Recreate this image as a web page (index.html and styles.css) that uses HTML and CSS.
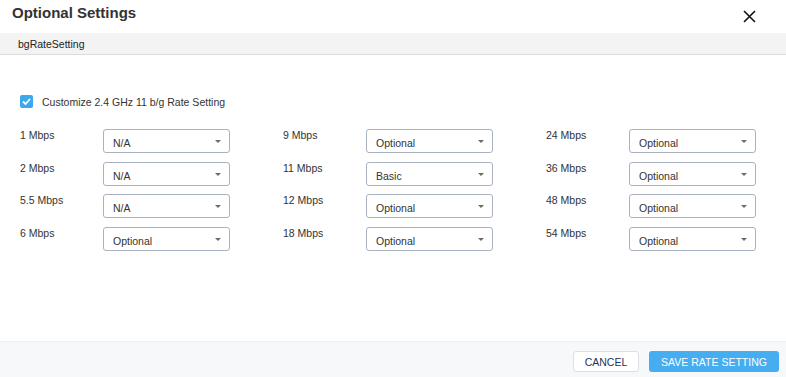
FILE: index.html
```html
<!DOCTYPE html>
<html lang="en">
<head>
    <meta charset="UTF-8">
    <meta name="viewport" content="width=device-width, initial-scale=1.0">
    <title>Optional Settings</title>
    <link rel="stylesheet" href="styles.css">
</head>
<body>

    <div class="dialog">
        <!-- Header -->
        <div class="dialog-header">
            <h1 class="dialog-title">Optional Settings</h1>
            <button class="close-btn" aria-label="Close">
                <svg width="13" height="13" viewBox="0 0 13 13">
                    <path d="M1 1 L12 12 M12 1 L1 12" stroke="#111" stroke-width="1.6" fill="none"/>
                </svg>
            </button>
        </div>

        <!-- Tab bar -->
        <div class="tab-bar">bgRateSetting</div>

        <!-- Content -->
        <div class="dialog-body">
            <label class="check-row">
                <span class="checkbox">
                    <svg width="9" height="7" viewBox="0 0 9 7">
                        <path d="M1 3.5 L3.5 6 L8 1" stroke="#fff" stroke-width="1.8" fill="none"/>
                    </svg>
                </span>
                Customize 2.4 GHz 11 b/g Rate Setting
            </label>

            <div class="rate-grid">
                <div class="rate-item"><span class="rate-label">1 Mbps</span><div class="select">N/A<span class="caret"></span></div></div>
                <div class="rate-item"><span class="rate-label">9 Mbps</span><div class="select">Optional<span class="caret"></span></div></div>
                <div class="rate-item"><span class="rate-label">24 Mbps</span><div class="select">Optional<span class="caret"></span></div></div>

                <div class="rate-item"><span class="rate-label">2 Mbps</span><div class="select">N/A<span class="caret"></span></div></div>
                <div class="rate-item"><span class="rate-label">11 Mbps</span><div class="select">Basic<span class="caret"></span></div></div>
                <div class="rate-item"><span class="rate-label">36 Mbps</span><div class="select">Optional<span class="caret"></span></div></div>

                <div class="rate-item"><span class="rate-label">5.5 Mbps</span><div class="select">N/A<span class="caret"></span></div></div>
                <div class="rate-item"><span class="rate-label">12 Mbps</span><div class="select">Optional<span class="caret"></span></div></div>
                <div class="rate-item"><span class="rate-label">48 Mbps</span><div class="select">Optional<span class="caret"></span></div></div>

                <div class="rate-item"><span class="rate-label">6 Mbps</span><div class="select">Optional<span class="caret"></span></div></div>
                <div class="rate-item"><span class="rate-label">18 Mbps</span><div class="select">Optional<span class="caret"></span></div></div>
                <div class="rate-item"><span class="rate-label">54 Mbps</span><div class="select">Optional<span class="caret"></span></div></div>
            </div>
        </div>

        <!-- Footer -->
        <div class="dialog-footer">
            <button class="btn btn-cancel">CANCEL</button>
            <button class="btn btn-save">SAVE RATE SETTING</button>
        </div>
    </div>

</body>
</html>
```

FILE: styles.css
```css
/* Basic resets and body styling */
body {
    font-family: "Liberation Sans", Arial, sans-serif;
    margin: 0;
    padding: 0;
    background-color: #fff;
    color: #333;
}

.dialog {
    display: flex;
    flex-direction: column;
    height: 377px;
}

/* Header */
.dialog-header {
    height: 33px;
    display: flex;
    justify-content: space-between;
    align-items: flex-start;
    padding: 0 30px 0 12px;
    box-sizing: border-box;
}

.dialog-title {
    margin: 0;
    padding-top: 4px;
    font-size: 15px;
    line-height: 18px;
    font-weight: bold;
    color: #333;
}

.close-btn {
    margin-top: 10px;
    padding: 0;
    border: none;
    background: none;
    line-height: 0;
    cursor: pointer;
}

/* Tab bar */
.tab-bar {
    height: 21px;
    line-height: 23px;
    padding-left: 18px;
    font-size: 10.5px;
    color: #222;
    background-color: #f3f3f3;
    border-bottom: 1px solid #dcdcdc;
}

/* Body */
.dialog-body {
    flex: 1;
    padding: 40px 0 0 20px;
}

.check-row {
    display: flex;
    align-items: center;
    gap: 9px;
    font-size: 10.5px;
    color: #333;
    margin-bottom: 21px;
}

.checkbox {
    width: 13px;
    height: 13px;
    border-radius: 2px;
    background-color: #3ca8ee;
    display: flex;
    align-items: center;
    justify-content: center;
}

/* Rate grid */
.rate-grid {
    display: grid;
    grid-template-columns: repeat(3, 210px);
    column-gap: 53px;
    row-gap: 8.5px;
}

.rate-item {
    display: flex;
}

.rate-label {
    width: 83px;
    padding-top: 0;
    font-size: 10.5px;
    line-height: 12px;
    color: #333;
}

.select {
    position: relative;
    width: 127px;
    height: 24px;
    box-sizing: border-box;
    border: 1px solid #a8b2c0;
    border-radius: 3px;
    padding: 7px 9px 0;
    font-size: 10.5px;
    line-height: 12px;
    color: #333;
}

.caret {
    position: absolute;
    right: 8px;
    top: 10px;
    width: 0;
    height: 0;
    border-left: 3px solid transparent;
    border-right: 3px solid transparent;
    border-top: 3px solid #6b6b6b;
}

/* Footer */
.dialog-footer {
    height: 36px;
    display: flex;
    justify-content: flex-end;
    align-items: flex-start;
    gap: 10px;
    padding: 9px 7px 0 0;
    box-sizing: border-box;
    background-color: #f7f8fa;
    border-top: 1px solid #eceef2;
}

.btn {
    height: 21px;
    font-family: "Liberation Sans", Arial, sans-serif;
    font-size: 10.5px;
    border-radius: 3px;
    cursor: pointer;
}

.btn-cancel {
    width: 66px;
    background-color: #fff;
    border: 1px solid #dcdfe5;
    color: #1d3461;
}

.btn-save {
    width: 130px;
    background-color: #45adf0;
    border: none;
    color: #fff;
}
```
